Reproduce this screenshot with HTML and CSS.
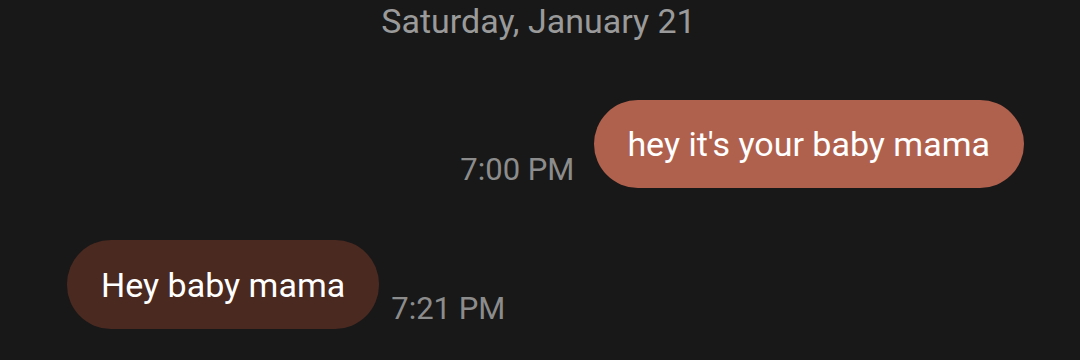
FILE: index.html
```html
<!DOCTYPE html>
<html>
<head>
<meta charset="utf-8">
<link rel="stylesheet" href="styles.css">
</head>
<body>
<div class="chat">
  <div class="date">Saturday, January 21</div>
  <div class="row out">
    <span class="time">7:00 PM</span>
    <div class="bubble sent">hey it's your baby mama</div>
  </div>
  <div class="row in">
    <div class="bubble recv">Hey baby mama</div>
    <span class="time">7:21 PM</span>
  </div>
</div>
</body>
</html>
```
FILE: styles.css
```css
html, body {
  margin: 0;
  padding: 0;
  background: #181818;
  width: 1080px;
  height: 360px;
  overflow: hidden;
}
.chat {
  font-family: Roboto, "Noto Sans", sans-serif;
  display: flex;
  flex-direction: column;
  padding: 0 56px 0 67px;
}
.date {
  text-align: center;
  color: #9a9a9a;
  font-size: 34px;
  line-height: 42px;
  margin-right: 14px;
}
.row {
  display: flex;
  align-items: flex-end;
  gap: 20px;
}
.row.out {
  justify-content: flex-end;
  margin-top: 58px;
}
.row.in {
  justify-content: flex-start;
  margin-top: 52px;
  gap: 12px;
}
.bubble {
  color: #ffffff;
  font-size: 34px;
  line-height: 40px;
  padding: 24px 34px 24px 33px;
  border-radius: 44px;
}
.sent {
  background: #b0614e;
}
.recv {
  background: #4a2920;
  padding: 25px 34px 24px 34px;
}
.time {
  color: #8c8c8c;
  font-size: 31px;
  line-height: 36px;
}
.row.in .time {
  padding-bottom: 2px;
}
```
